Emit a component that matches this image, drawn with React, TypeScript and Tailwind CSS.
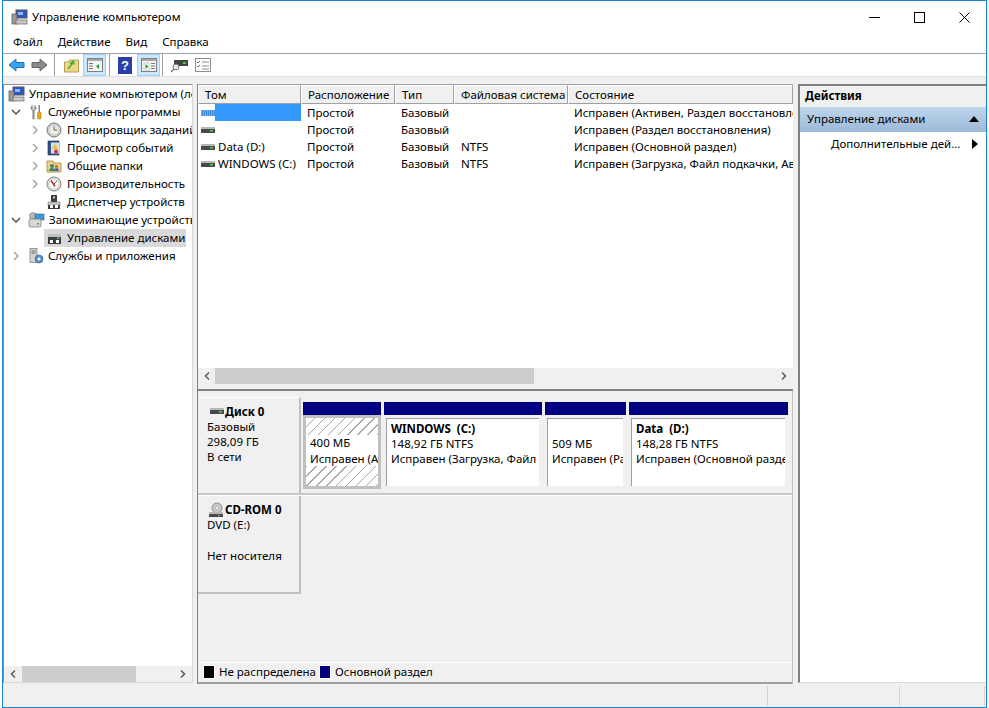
import React from 'react';

const Chev = ({ down = false }: { down?: boolean }) => (
  <svg width="10" height="10" viewBox="0 0 10 10" fill="none" stroke={down ? '#505050' : '#a6a6a6'} strokeWidth="1.5">
    {down ? <path d="M1 3l4 4 4-4" /> : <path d="M3 1l4 4-4 4" />}
  </svg>
);

const ScrollArrow = ({ left = false }: { left?: boolean }) => (
  <svg width="10" height="10" viewBox="0 0 10 10" fill="none" stroke="#606060" strokeWidth="1.6">
    {left ? <path d="M7 1.500L3.500 5 7 8.500" /> : <path d="M3 1.500L6.500 5 3 8.500" />}
  </svg>
);

const DiskIcon = ({ hatch = false }: { hatch?: boolean }) => (
  <svg width="16" height="16" viewBox="0 0 16 16">
    {hatch ? (
      <>
        <rect x="2" y="5" width="14" height="6" fill="#3f8fe0" />
        <path d="M2 6h14M2 8h14M2 10h14" stroke="#cfe4fa" strokeWidth="0.7" strokeDasharray="1 1" />
      </>
    ) : (
      <>
        <rect x="2" y="5" width="14" height="2" fill="#b8b8b8" />
        <rect x="2" y="7" width="14" height="4" fill="#4a4a4a" />
        <rect x="11" y="8" width="3" height="1.5" fill="#4fd04f" />
      </>
    )}
  </svg>
);

const PcIcon = () => (
  <svg width="17" height="16" viewBox="0 0 17 16">
    <rect x="5" y="1" width="11" height="8" fill="#2b56c4" stroke="#555" />
    <rect x="7" y="3" width="5" height="3" fill="#8fb6f0" />
    <rect x="1" y="5" width="5" height="10" fill="#9a9a9a" stroke="#555" strokeWidth="0.7" />
    <rect x="5" y="11" width="11" height="4" fill="#c8c8c8" stroke="#666" strokeWidth="0.7" />
  </svg>
);

const ToolsIcon = () => (
  <svg width="16" height="16" viewBox="0 0 16 16">
    <path d="M4 1v4M7 1v4M3 3c0 3 1 3 2 3v9h1V6c1 0 2 0 2-3" stroke="#777" fill="#ddd" />
    <rect x="10.5" y="1" width="1.5" height="7" fill="#888" />
    <rect x="9.5" y="8" width="3.5" height="7" rx="1" fill="#e8a818" stroke="#a87208" strokeWidth="0.5" />
  </svg>
);

const ClockIcon = () => (
  <svg width="16" height="16" viewBox="0 0 16 16">
    <circle cx="8" cy="8" r="7" fill="#d8d8d8" stroke="#777" />
    <circle cx="8" cy="8" r="5" fill="#f2f0e2" stroke="#a8a8a8" strokeWidth="0.6" />
    <path d="M8 4.5V8h3" stroke="#555" fill="none" />
  </svg>
);

const LogIcon = () => (
  <svg width="16" height="16" viewBox="0 0 16 16">
    <rect x="2" y="1" width="11" height="14" fill="#33558f" stroke="#223" strokeWidth="0.6" />
    <rect x="5" y="2.5" width="8" height="11" fill="#d8dfe8" />
    <path d="M9 4l3 5H6z" fill="#f0c020" />
    <circle cx="10" cy="11.5" r="2" fill="#c83030" />
  </svg>
);

const SharedIcon = () => (
  <svg width="16" height="16" viewBox="0 0 16 16">
    <path d="M1 3h6l1 2h7v9H1z" fill="#eed28a" stroke="#b89a50" />
    <circle cx="6" cy="8" r="2" fill="#3a8a6a" />
    <path d="M3 13c0-2 1-3 3-3s3 1 3 3z" fill="#3a8a6a" />
    <circle cx="10.5" cy="8.5" r="1.7" fill="#c87838" />
    <path d="M8 13c0-2 1-3 2.500-3s2.500 1 2.500 3z" fill="#4a6ab8" />
  </svg>
);

const PerfIcon = () => (
  <svg width="16" height="16" viewBox="0 0 16 16">
    <circle cx="8" cy="8" r="7" fill="#e4e4e4" stroke="#808080" />
    <circle cx="8" cy="8" r="5" fill="#fff" stroke="#b0b0b0" strokeWidth="0.6" />
    <path d="M5 4.500l4 6" stroke="#c82020" strokeWidth="1.400" />
    <path d="M8 8l3-3" stroke="#606060" />
  </svg>
);

const DevIcon = () => (
  <svg width="16" height="16" viewBox="0 0 16 16">
    <rect x="5" y="1" width="6" height="7" fill="#3c3c3c" />
    <rect x="7" y="2.500" width="2" height="2" fill="#ccc" />
    <rect x="2" y="8" width="12" height="3" fill="#c8c8c8" stroke="#666" strokeWidth="0.5" />
    <rect x="2" y="11" width="12" height="4" fill="#3c3c3c" />
    <rect x="4" y="11" width="3" height="3" fill="#fff" />
    <rect x="9" y="11" width="3" height="3" fill="#fff" />
  </svg>
);

const StoreIcon = () => (
  <svg width="17" height="16" viewBox="0 0 17 16">
    <circle cx="5" cy="4" r="3.500" fill="#b8b8b8" stroke="#777" strokeWidth="0.6" />
    <rect x="7" y="2" width="9" height="6" fill="#3a9ad8" stroke="#2a6a98" strokeWidth="0.6" />
    <rect x="1" y="7" width="12" height="8" rx="1" fill="#d8d8d8" stroke="#777" strokeWidth="0.7" />
    <rect x="9" y="11" width="2" height="1.500" fill="#40b040" />
  </svg>
);

const DiskMgmtIcon = () => (
  <svg width="16" height="16" viewBox="0 0 16 16">
    <rect x="2" y="4" width="13" height="3" fill="#c0c0c0" />
    <rect x="2" y="7" width="13" height="3" fill="#3c3c3c" />
    <rect x="11" y="7.500" width="2.500" height="1.500" fill="#4fd04f" />
    <rect x="2" y="10" width="13" height="4" fill="#3c3c3c" />
    <rect x="4" y="10" width="3" height="3" fill="#fff" />
    <rect x="10" y="10" width="3" height="3" fill="#fff" />
  </svg>
);

const ServicesIcon = () => (
  <svg width="16" height="16" viewBox="0 0 16 16">
    <rect x="2" y="0.500" width="7" height="14" fill="#d4d4d4" stroke="#777" strokeWidth="0.7" />
    <path d="M3.500 3h4M3.500 5h4" stroke="#666" />
    <circle cx="11" cy="11" r="4" fill="#5a8ec8" stroke="#33608f" strokeWidth="0.6" />
    <circle cx="11" cy="11" r="1.500" fill="#fff" />
  </svg>
);

const ToolBtn = ({ children }: { children: React.ReactNode }) => (
  <div className="w-[23px] h-[22px] flex items-center justify-center bg-[#cce8ff] border border-[#99d1ff]">
    {children}
  </div>
);

const PaneIcon = ({ right = false }: { right?: boolean }) => (
  <svg width="16" height="14" viewBox="0 0 16 14">
    <rect x="0.500" y="0.500" width="15" height="13" fill="#f4f4f4" stroke="#808080" />
    <rect x="1" y="1" width="14" height="2" fill="#a8a8a8" />
    {right ? (
      <>
        <path d="M3 5h5v7H3z" fill="#fff" stroke="#aaa" strokeWidth="0.5" />
        <path d="M4.500 6l3 2.500-3 2.500z" fill="#1fa02c" />
        <path d="M10 5.500h4M10 8h4M10 10.500h4" stroke="#777" />
      </>
    ) : (
      <>
        <path d="M2 5.500h4M2 8h4M2 10.500h4" stroke="#777" />
        <path d="M12 6l-3 2.500 3 2.500z" fill="#1fa02c" />
      </>
    )}
  </svg>
);

const Sep = () => <div className="w-px h-[22px] bg-[#a0a0a0]" />;

const treeRows = [
  { t: 'Управление компьютером (локальный)', pad: 'pl-[4px]', icon: <PcIcon />, gap: 'gap-[4px]' },
  { t: 'Служебные программы', pad: 'pl-[7px]', chev: 'down', icon: <ToolsIcon />, gap: 'gap-[4px]' },
  { t: 'Планировщик заданий', pad: 'pl-[26px]', chev: 'right', icon: <ClockIcon />, gap: 'gap-[5px]', lvl: true },
  { t: 'Просмотр событий', pad: 'pl-[26px]', chev: 'right', icon: <LogIcon />, gap: 'gap-[5px]', lvl: true },
  { t: 'Общие папки', pad: 'pl-[26px]', chev: 'right', icon: <SharedIcon />, gap: 'gap-[5px]', lvl: true },
  { t: 'Производительность', pad: 'pl-[26px]', chev: 'right', icon: <PerfIcon />, gap: 'gap-[5px]', lvl: true },
  { t: 'Диспетчер устройств', pad: 'pl-[26px]', chev: 'none', icon: <DevIcon />, gap: 'gap-[5px]', lvl: true },
  { t: 'Запоминающие устройства', pad: 'pl-[7px]', chev: 'down', icon: <StoreIcon />, gap: 'gap-[4px]' },
  { t: 'Управление дисками', pad: 'pl-[40px]', icon: <DiskMgmtIcon />, gap: 'gap-[5px]', sel: true },
  { t: 'Службы и приложения', pad: 'pl-[7px]', chev: 'right', icon: <ServicesIcon />, gap: 'gap-[4px]' },
];

const cols = ['w-[103px]', 'w-[94px]', 'w-[59px]', 'w-[114px]', 'flex-1'];
const headers = ['Том', 'Расположение', 'Тип', 'Файловая система', 'Состояние'];

const volumes = [
  { name: '', hatch: true, sel: true, fs: '', st: 'Исправен (Активен, Раздел восстановления)' },
  { name: '', fs: '', st: 'Исправен (Раздел восстановления)' },
  { name: 'Data (D:)', fs: 'NTFS', st: 'Исправен (Основной раздел)' },
  { name: 'WINDOWS (C:)', fs: 'NTFS', st: 'Исправен (Загрузка, Файл подкачки, Аварийный дамп)' },
];

const Partition = ({ w, title, size, st }: { w: string; title?: string; size: string; st: string }) => (
  <div className={`${w} flex flex-col`}>
    <div className="h-[13px] bg-[#000080]" />
    <div className="h-[74px] bg-white mt-0 border-[3px] border-[#f0f0f0] border-l-[2px]">
      <div className="h-full border-l border-t border-[#a0a0a0] pl-[4px] overflow-hidden whitespace-nowrap">
        <div className="h-[16px] mt-[1px] font-bold leading-[17px] whitespace-pre">{title}</div>
        <div className="leading-[15px]">{size}</div>
        <div className="leading-[15px]">{st}</div>
      </div>
    </div>
  </div>
);

export default function App() {
  return (
    <div className="w-[989px] h-[708px] bg-white pl-[2px] pr-[2px] overflow-hidden text-[11.5px] text-black font-['Open_Sans','Noto_Sans',sans-serif]">
      <div className="h-[708px] flex flex-col border border-[#1883d7] bg-[#f0f0f0]">
        {/* title */}
        <div className="h-[32px] shrink-0 bg-white flex items-center pl-[8px]">
          <PcIcon />
          <span className="ml-[4px] flex-1">Управление компьютером</span>
          <div className="flex items-center pr-[16px] gap-[34px] text-black">
            <svg width="11" height="11" viewBox="0 0 11 11"><path d="M0 5.500h11" stroke="#000" /></svg>
            <svg width="11" height="11" viewBox="0 0 11 11"><rect x="0.500" y="0.500" width="10" height="10" fill="none" stroke="#000" /></svg>
            <svg width="11" height="11" viewBox="0 0 11 11"><path d="M0.500 0.500l10 10M10.500 0.500l-10 10" stroke="#000" /></svg>
          </div>
        </div>
        {/* menu */}
        <div className="h-[21px] shrink-0 bg-white flex items-center pl-[10px] pb-[2px] gap-[15px] border-b border-[#a0a0b0]">
          <span>Файл</span>
          <span>Действие</span>
          <span>Вид</span>
          <span>Справка</span>
        </div>
        {/* toolbar */}
        <div className="h-[23px] shrink-0 bg-white flex items-center pl-[5px] border-b border-[#e0e0e0]">
          <svg width="17" height="14" viewBox="0 0 17 14"><path d="M8 1L1 7l7 6V9.500h8v-5H8z" fill="#3ba0ea" stroke="#1c74b8" /></svg>
          <svg className="ml-[6px]" width="17" height="14" viewBox="0 0 17 14"><path d="M9 1l7 6-7 6V9.500H1v-5h8z" fill="#8a8a8a" stroke="#666" /></svg>
          <div className="ml-[6px]"><Sep /></div>
          <svg className="ml-[9px]" width="15" height="15" viewBox="0 0 15 15">
            <path d="M0.500 4h4l1-2h9v12H0.500z" fill="#f0d68c" stroke="#b89a50" />
            <path d="M3 11l4-5-2-1 5-3 1 5-2-1-4 5z" fill="#44b035" />
          </svg>
          <div className="ml-[4px]"><ToolBtn><PaneIcon /></ToolBtn></div>
          <div className="ml-[3px]"><Sep /></div>
          <svg className="ml-[8px]" width="14" height="17" viewBox="0 0 14 17">
            <rect width="14" height="17" fill="#2c3fa8" />
            <text x="7" y="13" textAnchor="middle" fill="#fff" fontSize="13" fontWeight="700" fontFamily="Liberation Sans">?</text>
          </svg>
          <div className="ml-[5px]"><ToolBtn><PaneIcon right /></ToolBtn></div>
          <div className="ml-[2px]"><Sep /></div>
          <svg className="ml-[8px]" width="17" height="16" viewBox="0 0 17 16">
            <rect x="3" y="3" width="14" height="6" fill="#444" />
            <rect x="12" y="5" width="3" height="2" fill="#44d044" />
            <circle cx="5" cy="10" r="3" fill="#dfe8f0" stroke="#777" />
            <path d="M3 12l-3 3" stroke="#777" strokeWidth="1.500" />
          </svg>
          <svg className="ml-[7px]" width="16" height="14" viewBox="0 0 16 14">
            <rect x="0.500" y="0.500" width="15" height="13" fill="#fff" stroke="#909090" />
            <path d="M2 4l1 1 2-2M2 8l1 1 2-2" stroke="#3a7ad0" fill="none" />
            <path d="M7 4h7M7 8h7M7 11h7" stroke="#909090" />
          </svg>
        </div>
        <div className="h-[7px] shrink-0" />
        {/* panes */}
        <div className="flex-1 min-h-0 flex">
          {/* tree */}
          <div className="w-[190px] shrink-0 flex flex-col bg-white border-t border-l border-[#909090] border-b border-b-[#d8d8d8] border-r border-r-[#d8d8d8] mb-[1px]">
            <div className="flex-1 min-h-0 overflow-hidden">
              {treeRows.map((r) => (
                <div key={r.t} className={`h-[18px] flex items-center whitespace-nowrap ${r.pad} ${r.gap}`}>
                  {r.chev && (
                    <span className={r.lvl ? 'w-[10px] flex justify-center mr-[1px]' : 'w-[10px] flex justify-center mr-[3px]'}>
                      {r.chev === 'down' && <Chev down />}
                      {r.chev === 'right' && <Chev />}
                    </span>
                  )}
                  {r.sel ? (
                    <span className="w-[142px] h-[18px] bg-[#d9d9d9] flex items-center pl-[2px] gap-[5px]">
                      <span className="shrink-0">{r.icon}</span>
                      <span>{r.t}</span>
                    </span>
                  ) : (
                    <>
                      <span className="shrink-0">{r.icon}</span>
                      <span>{r.t}</span>
                    </>
                  )}
                </div>
              ))}
            </div>
            <div className="h-[16px] shrink-0 bg-[#f0f0f0] flex items-center pl-[4px] pr-[4px]">
              <ScrollArrow left />
              <div className="ml-[4px] w-[114px] h-[16px] bg-[#cdcdcd]" />
              <div className="flex-1" />
              <ScrollArrow />
            </div>
          </div>
          <div className="w-[4px] shrink-0" />
          {/* center */}
          <div className="w-[596px] shrink-0 flex flex-col border-l border-[#808080]">
            <div className="h-[307px] shrink-0 flex flex-col bg-white border-t border-[#a0a0a0]">
              <div className="flex h-[19px] shrink-0 bg-[#f0f0f0]">
                {headers.map((h, i) => (
                  <div key={h} className={`${cols[i]} pl-[6px] leading-[17px] whitespace-nowrap overflow-hidden border-t border-l border-t-white border-l-white border-r border-b border-r-[#a0a0a0] border-b-[#a0a0a0]`}>{h}</div>
                ))}
              </div>
              <div className="flex-1 overflow-hidden">
                {volumes.map((v, i) => (
                  <div key={i} className="flex h-[17px] leading-[17px] whitespace-nowrap">
                    <div className={`${cols[0]} flex items-center`}>
                      <span className="shrink-0 ml-[1px]"><DiskIcon hatch={v.hatch} /></span>
                      {v.sel ? (
                        <span className="flex-1 h-[17px] bg-[#3399ff]" />
                      ) : (
                        <span className="pl-[3px]">{v.name}</span>
                      )}
                    </div>
                    <div className={`${cols[1]} pl-[6px]`}>Простой</div>
                    <div className={`${cols[2]} pl-[6px]`}>Базовый</div>
                    <div className={`${cols[3]} pl-[7px]`}>{v.fs}</div>
                    <div className="flex-1 pl-[6px] overflow-hidden">{v.st}</div>
                  </div>
                ))}
              </div>
              <div className="h-[16px] shrink-0 bg-[#f0f0f0] flex items-center pl-[4px] pr-[4px]">
                <ScrollArrow left />
                <div className="ml-[3px] w-[319px] h-[16px] bg-[#cdcdcd]" />
                <div className="flex-1" />
                <ScrollArrow />
              </div>
              <div className="h-[7px] shrink-0 bg-[#f0f0f0] border-b-2 border-[#808080]" />
            </div>
            {/* disks */}
            <div className="flex-1 min-h-0 flex flex-col border-r border-[#c0c0c0]">
              <div className="h-[104px] shrink-0 flex border-b-2 border-[#c8c8c8] pt-[6px]">
                <div className="w-[103px] shrink-0 border-t border-white border-r-2 border-r-[#c0c0c0] pl-[9px] pt-[5px] leading-[15px]">
                  <div className="flex items-center h-[16px] font-bold"><span className="ml-[1px]"><DiskIcon /></span><span className="ml-[1px]">Диск 0</span></div>
                  <div>Базовый</div>
                  <div>298,09 ГБ</div>
                  <div>В сети</div>
                </div>
                <div className="flex gap-[3px] pl-[2px] pt-[5px]">
                  <div className="w-[78px] flex flex-col">
                    <div className="h-[13px] bg-[#000080]" />
                    <div className="h-[74px] border-[3px] border-[#c0c0c0] bg-[repeating-linear-gradient(135deg,#fff_0,#fff_6px,#a8a8a8_6px,#a8a8a8_7px)] overflow-hidden whitespace-nowrap">
                      <div className="h-[17px]" />
                      <div className="bg-white leading-[16px] pl-[4px]">400 МБ</div>
                      <div className="bg-white leading-[15px] pl-[4px]">Исправен (А</div>
                    </div>
                  </div>
                  <Partition w="w-[158px]" title="WINDOWS  (C:)" size="148,92 ГБ NTFS" st="Исправен (Загрузка, Файл подкачки)" />
                  <Partition w="w-[81px]" size="509 МБ" st="Исправен (Раздел)" />
                  <Partition w="w-[159px]" title="Data  (D:)" size="148,28 ГБ NTFS" st="Исправен (Основной раздел)" />
                </div>
              </div>
              <div className="h-[99px] shrink-0 flex border-t border-white">
                <div className="w-[103px] shrink-0 border-r-2 border-b-2 border-[#c0c0c0] pl-[9px] pt-[6px] leading-[15px]">
                  <div className="flex items-center h-[15px] font-bold">
                    <svg className="ml-[1px]" width="16" height="16" viewBox="0 0 16 16">
                      <circle cx="9" cy="6" r="5" fill="#c8c8c8" stroke="#909090" />
                      <circle cx="9" cy="6" r="1.500" fill="#fff" stroke="#909090" strokeWidth="0.5" />
                      <rect x="1" y="10" width="14" height="2" fill="#b8b8b8" />
                      <rect x="1" y="12" width="14" height="3" fill="#4a4a4a" />
                      <rect x="10" y="13" width="2" height="1" fill="#4fd04f" />
                    </svg>
                    <span className="ml-[1px]">CD-ROM 0</span>
                  </div>
                  <div>DVD (E:)</div>
                  <div className="mt-[16px]">Нет носителя</div>
                </div>
              </div>
              <div className="flex-1" />
              <div className="h-[22px] shrink-0 flex items-center border-t border-white border-b-2 border-b-[#a0a0a0] pl-[5px] pb-[2px]">
                <span className="w-[12px] h-[14px] bg-black border border-white" />
                <span className="ml-[4px]">Не распределена</span>
                <span className="ml-[3px] w-[12px] h-[14px] bg-[#000080] border border-white" />
                <span className="ml-[4px]">Основной раздел</span>
              </div>
            </div>
          </div>
          <div className="w-[5px] shrink-0" />
          {/* actions */}
          <div className="flex-1 flex flex-col bg-white border-t-2 border-l-2 border-[#808080] border-b border-b-[#d8d8d8] mb-[1px]">
            <div className="h-[21px] shrink-0 bg-[#f0f0f0] pl-[5px] leading-[19px] font-bold">Действия</div>
            <div className="h-[25px] shrink-0 bg-gradient-to-b from-[#bfd6ec] to-[#9db9d8] flex items-center pl-[7px] pr-[7px] pb-[1px]">
              <span className="flex-1">Управление дисками</span>
              <svg width="10" height="6" viewBox="0 0 10 6"><path d="M5 0l5 6H0z" fill="#000" /></svg>
            </div>
            <div className="h-[24px] shrink-0 flex items-center pl-[31px] pr-[8px]">
              <span className="flex-1">Дополнительные дей...</span>
              <svg width="6" height="10" viewBox="0 0 6 10"><path d="M0 0l6 5-6 5z" fill="#000" /></svg>
            </div>
          </div>
        </div>
        {/* status */}
        <div className="h-[23px] shrink-0 flex pt-[2px] pb-[1px] justify-end">
          <div className="w-[132px] border-l border-[#d4d4d4]" />
          <div className="w-[86px] border-l border-r border-[#d4d4d4]" />
          <div className="w-[1px]" />
        </div>
      </div>
    </div>
  );
}
